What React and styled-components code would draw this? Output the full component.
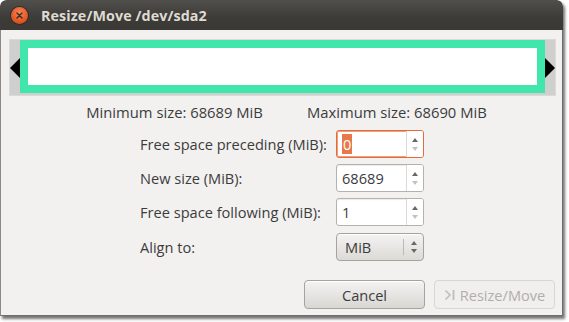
import React from "react";
import styled, { createGlobalStyle } from "styled-components";

const Global = createGlobalStyle`
  html, body { margin: 0; padding: 0; background: #ffffff; }
  body { font-family: "Open Sans", "DejaVu Sans", sans-serif; }
  #root { width: 569px; height: 322px; overflow: hidden; }
  * { box-sizing: border-box; }
`;

const Window = styled.div`
  width: 563px;
  height: 316px;
  display: flex;
  flex-direction: column;
  border-radius: 6px 6px 0 0;
  box-shadow: 2px 3px 3px rgba(0, 0, 0, 0.55);
  background: #f2f1f0;
  overflow: hidden;
`;

const TitleBar = styled.div`
  height: 30px;
  flex: none;
  display: flex;
  align-items: center;
  gap: 13px;
  padding-left: 11px;
  background: linear-gradient(#504f4b, #3c3b37 60%, #3a3935);
  border-radius: 6px 6px 0 0;
`;

const CloseButton = styled.div`
  width: 17px;
  height: 17px;
  border-radius: 50%;
  background: radial-gradient(circle at 50% 35%, #f7875a, #e0541f 65%, #b8420f);
  box-shadow: 0 0 0 1px #2d2c29;
  display: flex;
  align-items: center;
  justify-content: center;
`;

const Title = styled.div`
  color: #dfdbd2;
  font-weight: 700;
  font-size: 14.3px;
  letter-spacing: 0.1px;
`;

const Body = styled.div`
  flex: 1;
  display: flex;
  flex-direction: column;
  border-left: 1px solid #8a8985;
  border-right: 1px solid #6f6e6a;
  border-bottom: 1px solid #6f6e6a;
  padding: 9px 6px 0 8px;
`;

const PartFrame = styled.div`
  height: 57px;
  border: 1px solid #dcdad7;
  background: #cfcfcf;
  display: flex;
  align-items: stretch;
  padding: 0 10px 2px 10px;
  position: relative;
`;

const PartBlock = styled.div`
  flex: 1;
  border: 8px solid #40e6ac;
  background: #ffffff;
`;

const Arrow = styled.div`
  position: absolute;
  top: 18px;
  width: 0;
  height: 0;
  border-top: 10px solid transparent;
  border-bottom: 10px solid transparent;
  ${(p) =>
    p.$side === "left"
      ? "left: 0; border-right: 10px solid #000;"
      : "right: 0; border-left: 10px solid #000;"}
`;

const SizeRow = styled.div`
  display: flex;
  justify-content: center;
  gap: 44px;
  margin-top: 6px;
  padding-left: 8px;
  font-size: 14.8px;
  color: #3c3c3c;
`;

const Form = styled.div`
  display: grid;
  grid-template-columns: 188px 88px;
  column-gap: 8px;
  row-gap: 6px;
  align-items: center;
  margin: 8px auto 0;
  padding-right: 1px;
`;

const Label = styled.div`
  font-size: 14.6px;
  color: #3c3c3c;
`;

const Spin = styled.div`
  display: flex;
  height: 28px;
  border: 1px solid ${(p) => (p.$focus ? "#e46a3a" : "#b4b2ae")};
  border-radius: 3px;
  background: #ffffff;
  box-shadow: ${(p) => (p.$focus ? "inset 0 0 0 1px #f0a07e" : "inset 0 1px 1px rgba(0,0,0,0.08)")};
  overflow: hidden;
`;

const SpinText = styled.div`
  flex: 1;
  display: flex;
  align-items: center;
  padding-left: 5px;
  font-size: 14.6px;
  color: #3c3c3c;
`;

const Selected = styled.span`
  background: #e8784a;
  color: #ffffff;
  padding: 0 1px;
`;

const SpinButtons = styled.div`
  width: 17px;
  display: flex;
  flex-direction: column;
  align-items: center;
  justify-content: center;
  gap: 5px;
  border-left: 1px solid #dcdad7;
  background: #ffffff;
`;

const Tri = styled.div`
  width: 0;
  height: 0;
  border-left: 3px solid transparent;
  border-right: 3px solid transparent;
  ${(p) =>
    p.$up
      ? `border-bottom: 4px solid ${p.$dim ? "#c4c2bf" : "#6a6864"};`
      : `border-top: 4px solid ${p.$dim ? "#c4c2bf" : "#6a6864"};`}
`;

const Combo = styled.div`
  display: flex;
  height: 28px;
  margin-top: 1px;
  border: 1px solid #a5a39f;
  border-radius: 4px;
  background: linear-gradient(#f4f3f2, #dcdad6);
  box-shadow: inset 0 1px 0 #ffffff;
`;

const ComboText = styled.div`
  flex: 1;
  display: flex;
  align-items: center;
  padding-left: 8px;
  font-size: 14.6px;
  color: #3c3c3c;
`;

const ComboArrows = styled.div`
  width: 20px;
  margin: 5px 0;
  border-left: 1px solid #bcbab6;
  display: flex;
  flex-direction: column;
  align-items: center;
  justify-content: center;
  gap: 4px;
`;

const ButtonRow = styled.div`
  display: flex;
  justify-content: flex-end;
  gap: 9px;
  margin-top: auto;
  margin-bottom: 6px;
  padding-right: 1px;
`;

const Button = styled.div`
  width: 121px;
  height: 29px;
  border-radius: 4px;
  display: flex;
  align-items: center;
  justify-content: center;
  gap: 4px;
  font-size: 14.6px;
  border: 1px solid ${(p) => (p.$disabled ? "#d8d6d3" : "#a5a39f")};
  background: ${(p) =>
    p.$disabled ? "#f0efee" : "linear-gradient(#f4f3f2, #d9d7d3)"};
  color: ${(p) => (p.$disabled ? "#b0aeaa" : "#3c3c3c")};
  box-shadow: ${(p) => (p.$disabled ? "none" : "inset 0 1px 0 #ffffff")};
`;

function SpinButton({ value, focus }) {
  return (
    <Spin $focus={focus}>
      <SpinText>{focus ? <Selected>{value}</Selected> : value}</SpinText>
      <SpinButtons>
        <Tri $up />
        <Tri $dim />
      </SpinButtons>
    </Spin>
  );
}

export default function App() {
  return (
    <>
      <Global />
      <Window>
        <TitleBar>
          <CloseButton>
            <svg width="7" height="7" viewBox="0 0 7 7">
              <path d="M1 1L6 6M6 1L1 6" stroke="#3a2a20" strokeWidth="1.4" strokeLinecap="round" />
            </svg>
          </CloseButton>
          <Title>Resize/Move /dev/sda2</Title>
        </TitleBar>
        <Body>
          <PartFrame>
            <Arrow $side="left" />
            <PartBlock />
            <Arrow $side="right" />
          </PartFrame>
          <SizeRow>
            <span>Minimum size: 68689 MiB</span>
            <span>Maximum size: 68690 MiB</span>
          </SizeRow>
          <Form>
            <Label>Free space preceding (MiB):</Label>
            <SpinButton value="0" focus />
            <Label>New size (MiB):</Label>
            <SpinButton value="68689" />
            <Label>Free space following (MiB):</Label>
            <SpinButton value="1" />
            <Label>Align to:</Label>
            <Combo>
              <ComboText>MiB</ComboText>
              <ComboArrows>
                <Tri $up />
                <Tri />
              </ComboArrows>
            </Combo>
          </Form>
          <ButtonRow>
            <Button>Cancel</Button>
            <Button $disabled>
              <svg width="12" height="12" viewBox="0 0 12 12">
                <path d="M1.5 1.5L6 6L1.5 10.5" fill="none" stroke="#c0beba" strokeWidth="1.6" />
                <path d="M9.5 1V11" stroke="#c0beba" strokeWidth="1.8" />
              </svg>
              Resize/Move
            </Button>
          </ButtonRow>
        </Body>
      </Window>
    </>
  );
}
